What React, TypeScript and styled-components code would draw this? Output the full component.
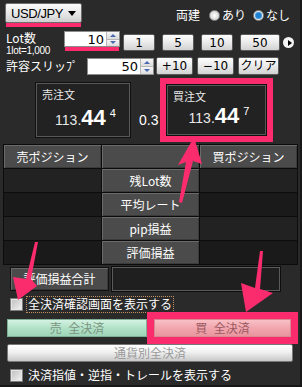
import React from "react";
import styled, { createGlobalStyle } from "styled-components";

const GlobalStyle = createGlobalStyle`
  html, body {
    margin: 0;
    padding: 0;
    background: #2a2a2a;
  }
  body {
    font-family: "Noto Sans CJK JP", "Liberation Sans", sans-serif;
  }
`;

const PINK = "#fb2c6e";

const Panel = styled.div`
  position: relative;
  width: 302px;
  height: 387px;
  box-sizing: border-box;
  border-right: 2px solid #181818;
  border-bottom: 2px solid #181818;
  background: #2a2a2a;
  color: #fff;
  font-size: 12px;
  line-height: 1;
  display: flex;
  flex-direction: column;
  overflow: hidden;
`;

const Row = styled.div<{ $h: number; $mt?: number; $pl?: number }>`
  display: flex;
  align-items: center;
  height: ${(p) => p.$h}px;
  margin-top: ${(p) => p.$mt ?? 0}px;
  padding-left: ${(p) => p.$pl ?? 0}px;
  flex-shrink: 0;
`;

/* ---------- top row ---------- */
const Marked = styled.div<{ $w: number }>`
  display: flex;
  flex-direction: column;
  width: ${(p) => p.$w}px;
  flex-shrink: 0;
`;

const PinkBar = styled.div`
  height: 4px;
  background: ${PINK};
  margin: 0 1px;
`;

const Select = styled.div`
  height: 20px;
  box-sizing: border-box;
  border: 1px solid #6e6e6e;
  border-radius: 2px;
  background: linear-gradient(#fbfbfb, #e4e4e4 60%, #cfcfcf);
  color: #000;
  display: flex;
  align-items: center;
  justify-content: space-between;
  padding: 0 5px 0 5px;
  font-family: "Liberation Sans", sans-serif;
  font-size: 13px;
  letter-spacing: -0.4px;
`;

const Caret = styled.span`
  width: 0;
  height: 0;
  border-left: 4px solid transparent;
  border-right: 4px solid transparent;
  border-top: 5px solid #000;
`;

const RadioGroup = styled.div`
  margin-left: auto;
  margin-right: 10px;
  display: flex;
  align-items: center;
  font-size: 12px;
`;

const RadioText = styled.span<{ $ml: number }>`
  width: 24px;
  flex-shrink: 0;
  white-space: nowrap;
  margin-left: ${(p) => p.$ml}px;
`;

const Radio = styled.span<{ $on?: boolean; $ml: number }>`
  width: 11px;
  height: 11px;
  flex-shrink: 0;
  border-radius: 50%;
  box-sizing: border-box;
  border: 1px solid #8a8a8a;
  background: ${(p) =>
    p.$on
      ? "radial-gradient(circle, #1f7fd0 0 2.5px, #6fb6ea 3.5px, #e8e8e8 4px)"
      : "radial-gradient(circle, #ffffff 0, #c6c6c6 100%)"};
  margin-left: ${(p) => p.$ml}px;
`;

/* ---------- lot / slip rows ---------- */
const LabelCol = styled.div<{ $w: number }>`
  width: ${(p) => p.$w}px;
  flex-shrink: 0;
  display: flex;
  flex-direction: column;
  gap: 2px;
`;

const Label = styled.span`
  font-size: 12px;
  line-height: 12px;
`;

const Small = styled.span`
  font-family: "Liberation Sans", sans-serif;
  font-size: 10px;
  line-height: 10px;
  letter-spacing: -0.3px;
`;

const NumInput = styled.div<{ $h: number }>`
  height: ${(p) => p.$h}px;
  box-sizing: border-box;
  background: #fff;
  border: 1px solid #8c8c8c;
  display: flex;
  align-items: stretch;
  color: #000;
  font-family: "DejaVu Sans", "Liberation Sans", sans-serif;
  font-size: 13px;
  flex-shrink: 0;
`;

const NumValue = styled.span`
  flex: 1;
  text-align: right;
  padding-right: 2px;
  align-self: center;
`;

const Spinner = styled.div`
  width: 12px;
  display: flex;
  flex-direction: column;
  border-left: 1px solid #b8b8b8;
`;

const SpinHalf = styled.div<{ $down?: boolean }>`
  flex: 1;
  display: flex;
  align-items: center;
  justify-content: center;
  background: linear-gradient(#f6f6f6, #dcdcdc);
  border-top: ${(p) => (p.$down ? "1px solid #b8b8b8" : "none")};
  &::after {
    content: "";
    width: 0;
    height: 0;
    border-left: 3px solid transparent;
    border-right: 3px solid transparent;
    ${(p) => (p.$down ? "border-top" : "border-bottom")}: 3px solid #4b68b0;
  }
`;

const Btn = styled.div<{ $w: number; $h: number; $ml: number }>`
  width: ${(p) => p.$w}px;
  height: ${(p) => p.$h}px;
  margin-left: ${(p) => p.$ml}px;
  flex-shrink: 0;
  box-sizing: border-box;
  border: 1px solid #5a5a5a;
  border-radius: 2px;
  background: linear-gradient(#fdfdfd, #ececec 45%, #d2d2d2);
  color: #000;
  display: flex;
  align-items: center;
  justify-content: center;
  font-family: "DejaVu Sans", "Noto Sans CJK JP", sans-serif;
  font-size: 12px;
`;

const PlayBtn = styled.span`
  width: 11px;
  height: 11px;
  flex-shrink: 0;
  border-radius: 50%;
  background: #f4f4f4;
  margin-left: 3px;
  display: flex;
  align-items: center;
  justify-content: center;
  &::after {
    content: "";
    margin-left: 2px;
    border-top: 3px solid transparent;
    border-bottom: 3px solid transparent;
    border-left: 4px solid #000;
  }
`;

/* ---------- price boxes ---------- */
const PriceBox = styled.div<{ $w: number; $h: number }>`
  width: ${(p) => p.$w}px;
  height: ${(p) => p.$h}px;
  flex-shrink: 0;
  box-sizing: border-box;
  border: 1px solid #585858;
  outline: 1px solid #111;
  background: #222;
  display: flex;
  flex-direction: column;
  padding: 5px 0 0 5px;
`;

const PriceLabel = styled.span`
  font-size: 11px;
  color: #e8e8e8;
`;

const Price = styled.div`
  margin-top: auto;
  margin-bottom: 7px;
  align-self: center;
  display: flex;
  align-items: baseline;
  font-family: "Liberation Sans", sans-serif;
`;

const PriceSmall = styled.span`
  font-size: 14px;
  color: #e8e8e8;
`;

const PriceBig = styled.span`
  font-size: 22px;
  font-weight: bold;
`;

const PriceSup = styled.span`
  font-size: 11px;
  align-self: flex-start;
  margin-left: 4px;
  margin-top: 1px;
`;

const Spread = styled.span`
  font-family: "Liberation Sans", sans-serif;
  font-size: 14px;
  align-self: flex-end;
  margin: 0 0 15px 9px;
  width: 21px;
`;

const PinkFrame = styled.div<{ $w: number; $h: number; $b: number }>`
  width: ${(p) => p.$w}px;
  height: ${(p) => p.$h}px;
  flex-shrink: 0;
  box-sizing: border-box;
  border: ${(p) => p.$b}px solid ${PINK};
  display: flex;
`;

/* ---------- position table ---------- */
const Table = styled.div`
  margin: 2px 0 0 3px;
  width: 295px;
  display: grid;
  grid-template-columns: 97px 97px 97px;
  grid-auto-rows: 23px;
  gap: 1px;
  padding: 1px;
  box-sizing: border-box;
  background: #0c0c0c;
  flex-shrink: 0;
`;

const HeadCell = styled.div`
  background: #4b4b4b;
  box-shadow: inset 1px 1px 0 #6a6a6a, inset -1px -1px 0 #3a3a3a;
  display: flex;
  align-items: center;
  justify-content: center;
  font-size: 12px;
`;

const DataCell = styled.div<{ $odd: boolean }>`
  background: ${(p) => (p.$odd ? "#1a1a1a" : "#222")};
`;

/* ---------- bottom ---------- */
const SumLabel = styled(HeadCell)`
  width: 99px;
  height: 24px;
  margin-left: 10px;
  box-sizing: border-box;
  border: 1px solid #111;
`;

const SumValue = styled.div`
  width: 168px;
  height: 24px;
  margin-left: 3px;
  box-sizing: border-box;
  border: 1px solid #5a5a5a;
  outline: 1px solid #0e0e0e;
  background: #1f1f1f;
`;

const Check = styled.span`
  width: 13px;
  height: 13px;
  box-sizing: border-box;
  border: 1px solid #7c7c7c;
  background: linear-gradient(135deg, #bdbdbd, #f4f4f4);
  box-shadow: inset 0 0 0 1px #e6e6e6;
  margin-left: 10px;
  flex-shrink: 0;
`;

const CheckText = styled.span<{ $focus?: boolean }>`
  margin-left: 3px;
  padding: 1px 1px 2px 1px;
  border: 1px dotted ${(p) => (p.$focus ? "#c09060" : "transparent")};
  font-size: 12px;
  white-space: nowrap;
`;

const SettleBtn = styled.div<{ $kind: "sell" | "buy" }>`
  display: flex;
  align-items: center;
  justify-content: center;
  box-sizing: border-box;
  font-size: 12px;
  word-spacing: 4px;
  ${(p) =>
    p.$kind === "sell"
      ? `
    width: 140px;
    height: 18px;
    margin-left: 7px;
    border: 1px solid #7fae95;
    background: linear-gradient(#d4f2e2, #b2e2c8 50%, #9ed4b8);
    color: #7b9480;
  `
      : `
    flex: 1;
    border: 1px solid #d88890;
    background: linear-gradient(#f8c0c6, #f2a6ae 50%, #e8959e);
    color: #9a5860;
  `}
`;

const WideBtn = styled.div`
  width: 286px;
  height: 18px;
  margin-left: 7px;
  box-sizing: border-box;
  border: 1px solid #777;
  border-radius: 2px;
  background: linear-gradient(#ffffff, #f0f0f0 45%, #c8c8c8);
  color: #9a9a9a;
  display: flex;
  align-items: center;
  justify-content: center;
  font-size: 12px;
  flex-shrink: 0;
`;

const Overlay = styled.svg`
  position: absolute;
  left: 0;
  top: 0;
  width: 300px;
  height: 385px;
  pointer-events: none;
`;

const rows = ["残Lot数", "平均レート", "pip損益", "評価損益"];

export default function App() {
  return (
    <>
      <GlobalStyle />
      <Panel>
        <Row $h={30} $pl={5}>
          <Marked $w={77} style={{ alignSelf: "flex-start", marginTop: 3 }}>
            <Select>
              USD/JPY
              <Caret />
            </Select>
            <PinkBar />
          </Marked>
          <RadioGroup>
            <RadioText $ml={0}>両建</RadioText>
            <Radio $ml={9} />
            <RadioText $ml={2}>あり</RadioText>
            <Radio $on $ml={7} />
            <RadioText $ml={2}>なし</RadioText>
          </RadioGroup>
        </Row>

        <Row $h={25} $pl={6}>
          <LabelCol $w={58} style={{ alignSelf: "flex-start", marginTop: 2 }}>
            <Label>Lot数</Label>
            <Small>1lot=1,000</Small>
          </LabelCol>
          <Marked $w={56} style={{ alignSelf: "flex-start", marginTop: 1 }}>
            <NumInput $h={16}>
              <NumValue>10</NumValue>
              <Spinner>
                <SpinHalf />
                <SpinHalf $down />
              </Spinner>
            </NumInput>
            <PinkBar />
          </Marked>
          <Btn $w={32} $h={17} $ml={3}>1</Btn>
          <Btn $w={32} $h={17} $ml={7}>5</Btn>
          <Btn $w={32} $h={17} $ml={7}>10</Btn>
          <Btn $w={40} $h={17} $ml={7}>50</Btn>
          <PlayBtn />
        </Row>

        <Row $h={22} $pl={6}>
          <LabelCol $w={81}>
            <Label>許容スリッﾌﾟ</Label>
          </LabelCol>
          <NumInput $h={17} style={{ width: 67 }}>
            <NumValue>50</NumValue>
            <Spinner>
              <SpinHalf />
              <SpinHalf $down />
            </Spinner>
          </NumInput>
          <Btn $w={37} $h={18} $ml={2}>+10</Btn>
          <Btn $w={37} $h={18} $ml={4}>−10</Btn>
          <Btn $w={41} $h={18} $ml={4}>クリア</Btn>
        </Row>

        <Row $h={64} $mt={1} $pl={36}>
          <PriceBox $w={94} $h={54}>
            <PriceLabel>売注文</PriceLabel>
            <Price>
              <PriceSmall>113.</PriceSmall>
              <PriceBig>44</PriceBig>
              <PriceSup>4</PriceSup>
            </Price>
          </PriceBox>
          <Spread>0.3</Spread>
          <PinkFrame $w={113} $h={64} $b={7}>
            <PriceBox $w={99} $h={50}>
              <PriceLabel>買注文</PriceLabel>
              <Price>
                <PriceSmall>113.</PriceSmall>
                <PriceBig>44</PriceBig>
                <PriceSup>7</PriceSup>
              </Price>
            </PriceBox>
          </PinkFrame>
        </Row>

        <Table>
          <HeadCell>売ポジション</HeadCell>
          <HeadCell />
          <HeadCell>買ポジション</HeadCell>
          {rows.map((r, i) => (
            <React.Fragment key={r}>
              <DataCell $odd={i % 2 === 1} />
              <HeadCell>{r}</HeadCell>
              <DataCell $odd={i % 2 === 1} />
            </React.Fragment>
          ))}
        </Table>

        <Row $h={24} $mt={2}>
          <SumLabel>評価損益合計</SumLabel>
          <SumValue />
        </Row>

        <Row $h={16} $mt={5}>
          <Check />
          <CheckText $focus>全決済確認画面を表示する</CheckText>
        </Row>

        <Row $h={32}>
          <SettleBtn $kind="sell">売 全決済</SettleBtn>
          <PinkFrame $w={151} $h={32} $b={7}>
            <SettleBtn $kind="buy">買 全決済</SettleBtn>
          </PinkFrame>
        </Row>

        <WideBtn>通貨別全決済</WideBtn>

        <Row $h={16} $mt={5}>
          <Check />
          <CheckText>決済指値・逆指・トレールを表示する</CheckText>
        </Row>

        <Overlay viewBox="0 0 300 385">
          <polygon
            fill={PINK}
            points="194,137 202,164 193,161 182,203 179,202 186,162 178,165"
          />
          <polygon
            fill={PINK}
            points="38,242 31,279 37,286 18,300 13,277 26,279 35,242"
          />
          <polygon
            fill={PINK}
            points="263,251 260,289 273,293 246,312 241,283 255,288 260,251"
          />
        </Overlay>
      </Panel>
    </>
  );
}
